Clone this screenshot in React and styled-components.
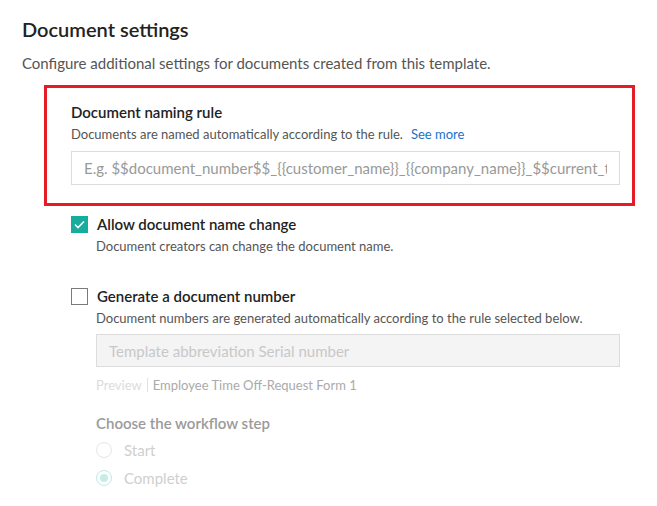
import React from 'react'
import styled, { createGlobalStyle } from 'styled-components'

const Global = createGlobalStyle`
  body {
    margin: 0;
    background: #fff;
    font-family: Lato, "Noto Sans", sans-serif;
    color: #222;
  }
`

const Page = styled.div`
  padding: 17px 22px 0;
`

const Title = styled.h2`
  margin: 0;
  font-size: 20px;
  font-weight: 600;
  color: #222;
  line-height: 24px;
`

const Subtitle = styled.p`
  margin: 12px 0 0;
  font-size: 15px;
  color: #555;
  line-height: 20px;
`

const Highlight = styled.div`
  margin: 12px 0 0 22px;
  width: 591px;
  box-sizing: border-box;
  border: 3px solid #e51c26;
  padding: 14px 12px 18px 24px;
`

const Label = styled.div`
  font-size: 15px;
  font-weight: 600;
  line-height: 20px;
  color: ${p => (p.$muted ? '#9a9a9a' : '#222')};
`

const Help = styled.div`
  margin-top: 3px;
  font-size: 13px;
  line-height: 18px;
  color: #555;
`

const More = styled.a`
  color: #1a73c8;
  margin-left: 8px;
  text-decoration: none;
`

const Input = styled.input`
  display: block;
  width: 100%;
  box-sizing: border-box;
  height: ${p => (p.disabled ? 33 : 34)}px;
  margin-top: ${p => (p.disabled ? 7 : 8)}px;
  padding: 0 12px;
  font-family: inherit;
  font-size: 15px;
  border: 1px solid #dcdcdc;
  background: ${p => (p.disabled ? '#f4f4f4' : '#fff')};
  outline: none;
  &::placeholder {
    color: ${p => (p.disabled ? '#c8c8c8' : '#999')};
  }
`

const Options = styled.div`
  margin-left: 49px;
  width: 549px;
`

const Option = styled.div`
  margin-top: ${p => p.$gap}px;
`

const CheckRow = styled.label`
  display: flex;
  align-items: center;
  gap: 9px;
`

const Box = styled.span`
  width: 17px;
  height: 17px;
  box-sizing: border-box;
  display: inline-flex;
  align-items: center;
  justify-content: center;
  background: ${p => (p.$on ? '#17ad9c' : '#fff')};
  border: 1px solid ${p => (p.$on ? '#17ad9c' : '#7a7a7a')};
`

const Body = styled.div`
  margin-left: 25px;
`

const Preview = styled.div`
  margin-top: 9px;
  font-size: 13px;
  line-height: 18px;
  color: #aaa;
  display: flex;
  align-items: center;
`

const PreviewTag = styled.span`
  color: #dcdcdc;
  padding-right: 5px;
  margin-right: 5px;
  border-right: 1px solid #e2e2e2;
  line-height: 14px;
`

const Step = styled.div`
  margin-top: 19px;
`

const RadioRow = styled.div`
  display: flex;
  align-items: center;
  gap: 12px;
  margin-top: ${p => p.$first ? 7 : 8}px;
  font-size: 15px;
  color: #cfcfcf;
  line-height: 20px;
`

const Radio = styled.span`
  width: 16px;
  height: 16px;
  box-sizing: border-box;
  border-radius: 50%;
  border: 1px solid ${p => (p.$on ? '#bfe9e3' : '#e6e6e6')};
  display: inline-flex;
  align-items: center;
  justify-content: center;
  &::after {
    content: '';
    width: 8px;
    height: 8px;
    border-radius: 50%;
    background: ${p => (p.$on ? '#c6ece6' : 'transparent')};
  }
`

const Check = () => (
  <svg width="11" height="9" viewBox="0 0 11 9">
    <path d="M1 4.5 L4 7.5 L10 1.5" fill="none" stroke="#fff" strokeWidth="1.6" />
  </svg>
)

export default function App() {
  return (
    <Page>
      <Global />
      <Title>Document settings</Title>
      <Subtitle>Configure additional settings for documents created from this template.</Subtitle>
      <Highlight>
        <Label>Document naming rule</Label>
        <Help>
          Documents are named automatically according to the rule.
          <More href="#">See more</More>
        </Help>
        <Input placeholder="E.g. $$document_number$$_{{customer_name}}_{{company_name}}_$$current_time$$" />
      </Highlight>
      <Options>
        <Option $gap={8}>
          <CheckRow>
            <Box $on><Check /></Box>
            <Label>Allow document name change</Label>
          </CheckRow>
          <Body>
            <Help>Document creators can change the document name.</Help>
          </Body>
        </Option>
        <Option $gap={31}>
          <CheckRow>
            <Box />
            <Label>Generate a document number</Label>
          </CheckRow>
          <Body>
            <Help>Document numbers are generated automatically according to the rule selected below.</Help>
            <Input disabled placeholder="Template abbreviation Serial number" />
            <Preview>
              <PreviewTag>Preview</PreviewTag>
              Employee Time Off-Request Form 1
            </Preview>
            <Step>
              <Label $muted>Choose the workflow step</Label>
              <RadioRow $first><Radio />Start</RadioRow>
              <RadioRow><Radio $on />Complete</RadioRow>
            </Step>
          </Body>
        </Option>
      </Options>
    </Page>
  )
}
